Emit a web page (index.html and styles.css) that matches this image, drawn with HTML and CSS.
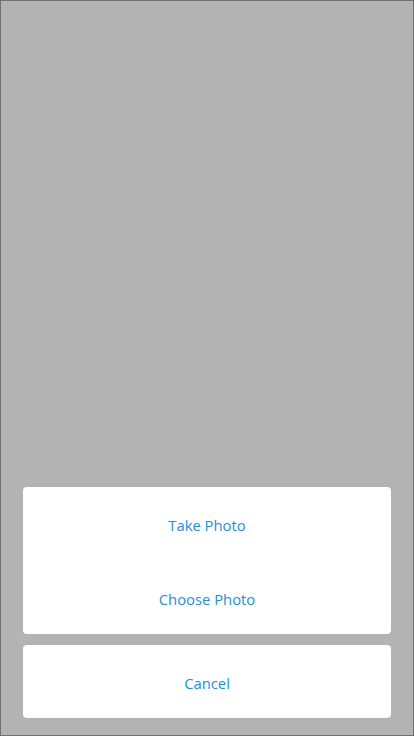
FILE: index.html
```html
<!DOCTYPE html>
<html>
<head>
<meta charset="utf-8">
<link rel="stylesheet" href="styles.css">
</head>
<body>
<div class="screen">
  <div class="sheet">
    <div class="group">
      <div class="action">Take Photo</div>
      <div class="action">Choose Photo</div>
    </div>
    <div class="group">
      <div class="action">Cancel</div>
    </div>
  </div>
</div>
</body>
</html>
```
FILE: styles.css
```css
html, body {
  margin: 0;
  padding: 0;
}
body {
  width: 414px;
  height: 736px;
  font-family: "Open Sans", "Noto Sans", sans-serif;
}
.screen {
  box-sizing: border-box;
  width: 414px;
  height: 736px;
  border: 1px solid #707070;
  background: #b3b3b3;
  display: flex;
  flex-direction: column;
  justify-content: flex-end;
  padding: 0 22px 17px;
}
.sheet {
  display: flex;
  flex-direction: column;
  gap: 11px;
}
.group {
  background: #ffffff;
  border-radius: 4px;
  display: flex;
  flex-direction: column;
}
.action {
  box-sizing: border-box;
  height: 73.5px;
  padding-top: 3px;
  display: flex;
  align-items: center;
  justify-content: center;
  color: #1b8fe3;
  font-size: 14.8px;
}
.group:last-child .action {
  height: 73px;
}
```
